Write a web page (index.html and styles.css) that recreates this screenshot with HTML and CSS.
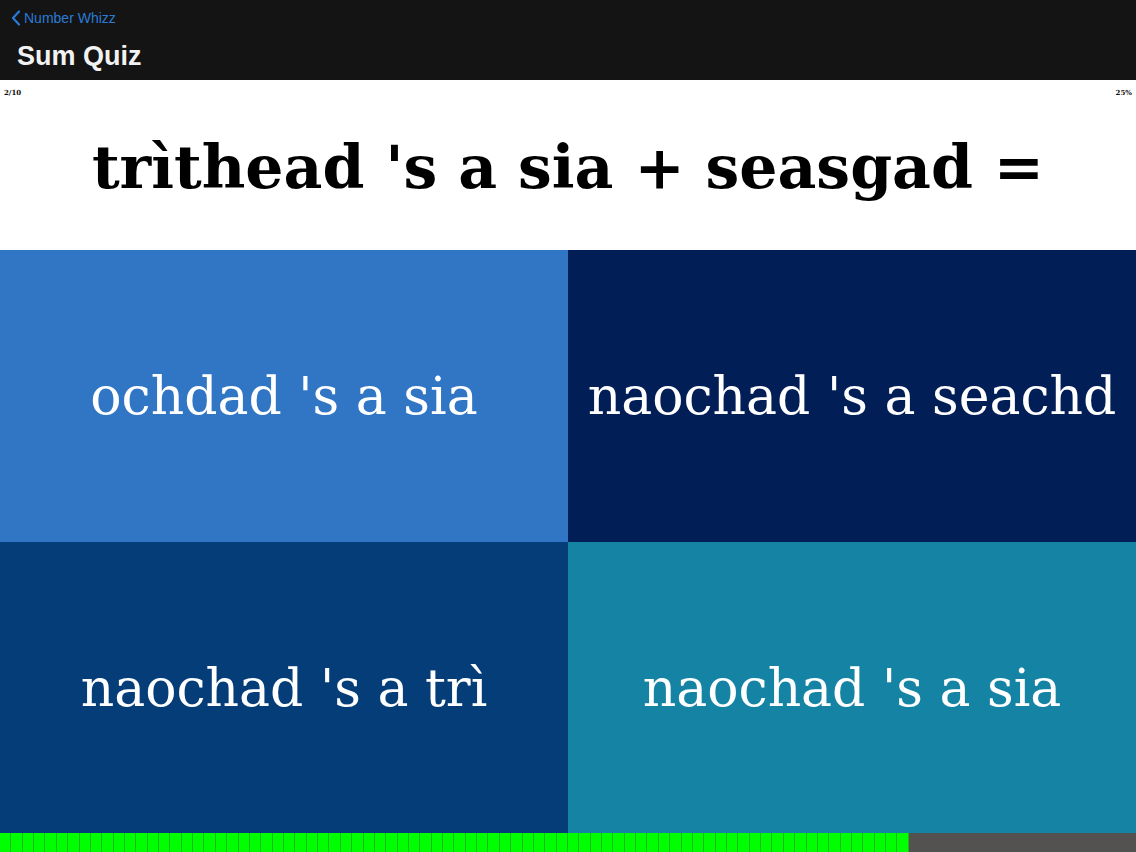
FILE: index.html
```html
<!DOCTYPE html>
<html>
<head>
<meta charset="utf-8">
<link rel="stylesheet" href="styles.css">
</head>
<body>
<div class="app">
  <header class="nav">
    <div class="back">
      <svg class="chev" width="10" height="16" viewBox="0 0 10 16"><path d="M8 1.5 L2 8 L8 14.5" fill="none" stroke="#2a7bd6" stroke-width="2.2" stroke-linecap="round" stroke-linejoin="round"/></svg>
      <span>Number Whizz</span>
    </div>
    <h1 class="title">Sum Quiz</h1>
  </header>
  <section class="question">
    <div class="meta"><span>2/10</span><span>25%</span></div>
    <div class="qtext">trìthead 's a sia + seasgad =</div>
  </section>
  <section class="answers">
    <div class="ans a1">ochdad 's a sia</div>
    <div class="ans a2">naochad 's a seachd</div>
    <div class="ans a3">naochad 's a trì</div>
    <div class="ans a4">naochad 's a sia</div>
  </section>
  <div class="progress" id="progress"></div>
</div>
<script>
  var p = document.getElementById('progress');
  for (var i = 0; i < 100; i++) {
    var d = document.createElement('div');
    d.className = i < 80 ? 'seg on' : 'seg';
    p.appendChild(d);
  }
</script>
</body>
</html>
```
FILE: styles.css
```css
html, body { margin: 0; padding: 0; }
body { width: 1136px; height: 852px; overflow: hidden; font-family: "Liberation Sans", Arial, sans-serif; }
.app { display: flex; flex-direction: column; height: 852px; }
.nav { background: #141414; height: 80px; box-sizing: border-box; padding: 8px 0 0 11px; }
.back { display: flex; align-items: center; gap: 3px; color: #2a7bd6; font-size: 14px; height: 20px; }
.title { margin: 13px 0 0 6px; color: #f2f2f2; font-size: 27px; font-weight: bold; font-family: "Liberation Sans", Arial, sans-serif; }
.question { background: #fff; height: 170px; display: flex; flex-direction: column; }
.meta { display: flex; justify-content: space-between; padding: 8px 4px 0 4px; font-family: "DejaVu Serif", serif; font-weight: bold; font-size: 7px; color: #111; }
.qtext { flex: 1; display: flex; align-items: center; justify-content: center; padding-bottom: 14px; font-family: "DejaVu Serif", serif; font-weight: bold; font-size: 60px; color: #000; }
.answers { display: grid; grid-template-columns: 568px 568px; grid-template-rows: 292px 291px; }
.ans { display: flex; align-items: center; justify-content: center; color: #fff; font-family: "DejaVu Serif", serif; font-size: 52px; }
.a1 { background: #3176c4; }
.a2 { background: #021e57; }
.a3 { background: #043d77; }
.a4 { background: #1584a4; }
.progress { flex: 1; display: flex; background: #545250; }
.seg { flex: 1; }
.seg.on { background: #00ff00; box-shadow: inset -1px 0 0 #1bb81b; }
```
